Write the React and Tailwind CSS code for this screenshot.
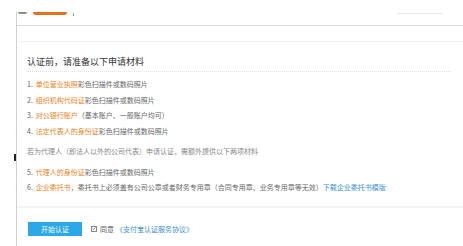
const ORANGE = 'text-[#ef8420]'

const firstItems = [
  { no: '1.', hl: '单位营业执照', rest: '彩色扫描件或数码照片' },
  { no: '2.', hl: '组织机构代码证', rest: '彩色扫描件或数码照片' },
  { no: '3.', hl: '对公银行账户', rest: '（基本账户、一般账户均可）' },
  { no: '4.', hl: '法定代表人的身份证', rest: '彩色扫描件或数码照片' },
]

function Item({ no, hl, rest, children }) {
  return (
    <p className="whitespace-nowrap text-[7px] leading-[15.7px] text-[#666]">
      <span className="mr-[3px]">{no}</span>
      <span className={ORANGE}>{hl}</span>
      {rest}
      {children}
    </p>
  )
}

export default function App() {
  return (
    <div className="relative h-[246px] w-[463px] overflow-hidden bg-white font-['Noto_Sans_CJK_SC','Noto_Sans',sans-serif]">
      {/* text cursor left over in the capture */}
      <div className="absolute left-[14px] top-[154px] h-[7px] w-[2px] bg-[#222]" />

      <div className="ml-[16px] mt-[12px] h-[234px] border-l border-[#cfcfcf]">
        <header className="flex h-[14px] items-start border-b border-[#dcd8e4]">
          <div className="ml-[1px] h-[2px] w-[9px] rounded-b-full bg-[#8c8c8c]" />
          <div className="ml-[6px] h-[3px] w-[34px] rounded-b-full bg-[#e96f1a]" />
          <div className="ml-[6px] mt-[1px] h-[3px] w-[1px] bg-[#9a9a9a]" />
          <div className="ml-auto mr-[20px] mt-[1px] h-[1px] w-[46px] bg-[#e6e6e6]" />
        </header>

        <section className="ml-[2px] mt-[15px] border-t border-[#f0f0f0] pl-[8px] pr-[12px]">
          <h1 className="border-b border-dotted border-[#e2e2e2] pb-[3px] pt-[14px] text-[9px] leading-[12px] text-[#333]">
            认证前，请准备以下申请材料
          </h1>

          <div className="mt-[5px]">
            {firstItems.map((item) => (
              <Item key={item.no} {...item} />
            ))}
          </div>

          <p className="mt-[4px] whitespace-nowrap text-[7px] leading-[15.7px] text-[#888]">
            若为代理人（即法人以外的公司代表）申请认证，需额外提供以下两项材料
          </p>

          <div className="mt-[5px]">
            <Item no="5." hl="代理人的身份证" rest="彩色扫描件或数码照片" />
            <Item
              no="6."
              hl="企业委托书"
              rest="，委托书上必须盖有公司公章或者财务专用章（合同专用章、业务专用章等无效）"
            >
              <span className="text-[#3a8fd8]">下载企业委托书模版</span>
            </Item>
          </div>
        </section>

        <div className="mt-[10px] h-[2px] bg-[#f3f3f3]" />

        <div className="ml-[11px] mt-[14px] flex items-center">
          <button
            type="button"
            className="flex h-[14px] w-[54px] items-center justify-center bg-[#2ba8e8] text-[7px] text-white"
          >
            开始认证
          </button>
          <span className="ml-[9px] flex h-[6px] w-[6px] items-center justify-center border border-[#888] bg-white">
            <svg viewBox="0 0 6 6" className="h-[5px] w-[5px]">
              <path d="M1 3 L2.4 4.4 L5 1.4" fill="none" stroke="#333" strokeWidth="1" />
            </svg>
          </span>
          <span className="ml-[3px] whitespace-nowrap text-[7px] text-[#555]">同意</span>
          <span className="ml-[2px] whitespace-nowrap text-[7px] text-[#3a8fd8]">《支付宝认证服务协议》</span>
        </div>
      </div>
    </div>
  )
}
